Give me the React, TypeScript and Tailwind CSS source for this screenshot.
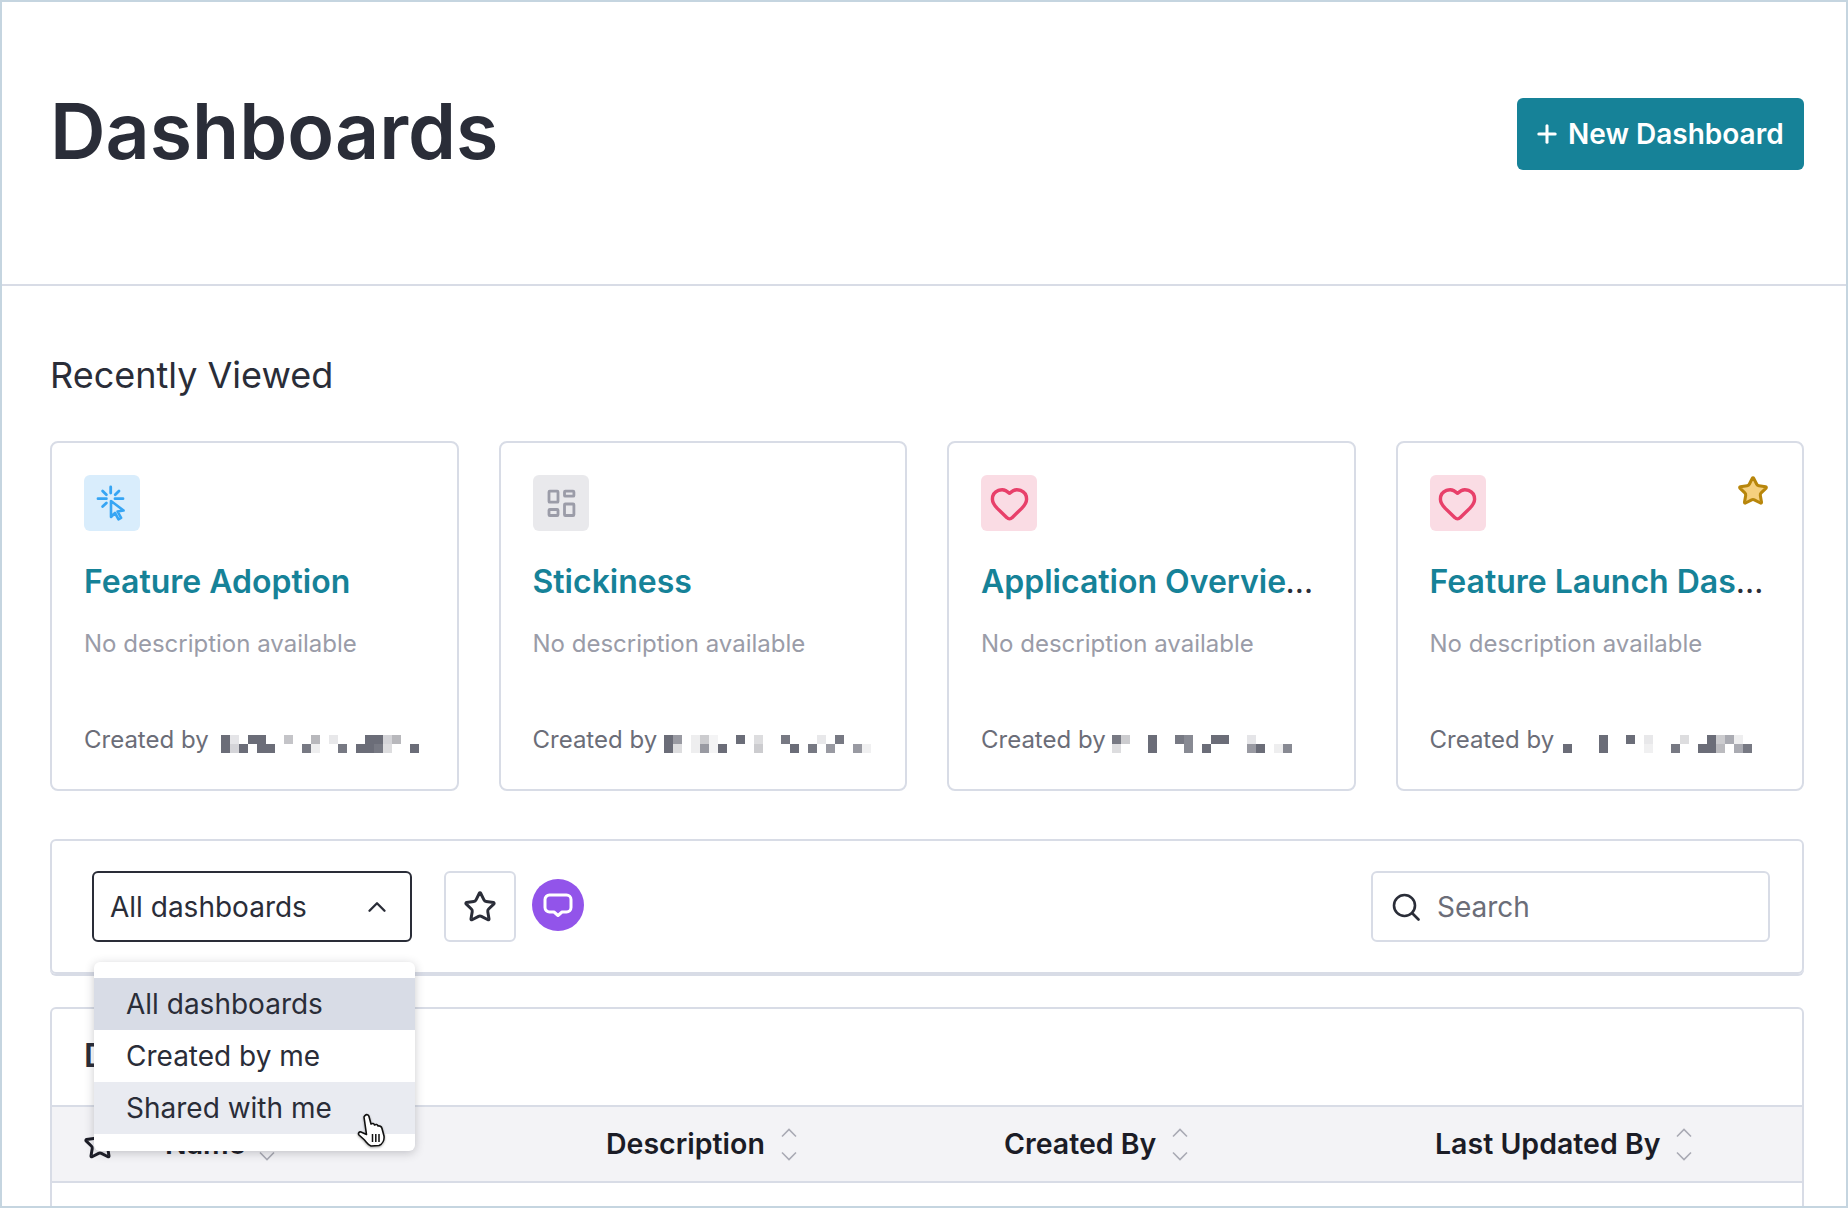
import { ChevronUp, Heart, Plus, Star } from "lucide-react";
import type { ReactNode } from "react";

// column, top cell, bottom cell of the blurred-out author names
type Cell = [number, string | null, string | null];

const D = "#6b6d78";

const namePixels: Cell[][] = [
  [
    [0, D, D], [1, "#e5e5e8", "#d4d4d8"], [2, null, D], [3, D, null], [4, D, D], [5, null, D],
    [7, "#c4c4c8", null], [9, null, "#777983"], [10, "#b8b8bc", "#eeeeef"], [12, "#e8e8ea", null],
    [13, null, "#777983"], [15, null, D], [16, D, D], [17, D, "#777983"], [18, "#d4d4d8", "#dddddf"],
    [19, "#b8b8bc", null], [21, null, D],
  ],
  [
    [0, D, D], [1, "#999aa2", "#dddddf"], [3, "#eeeeef", "#eeeeef"], [4, "#cccccf", "#999aa2"],
    [5, "#f4f4f5", "#f4f4f5"], [6, null, D], [8, D, null], [10, "#dddddf", "#cccccf"],
    [13, "#777983", null], [14, null, D], [16, null, "#777983"], [17, "#e8e8ea", null],
    [18, null, "#999aa2"], [19, "#777983", null], [21, null, "#999aa2"], [22, null, "#f0f0f1"],
  ],
  [
    [0, "#777983", "#dddddf"], [1, "#cccccf", null], [4, D, D], [7, "#777983", null],
    [8, "#888a93", "#888a93"], [10, null, D], [11, D, null], [12, D, null],
    [15, "#e5e5e8", "#999aa2"], [16, null, D], [18, null, "#eeeeef"], [19, null, "#888a93"],
  ],
  [
    [0, null, D], [4, D, D], [7, D, null], [9, "#e8e8ea", "#f0f0f1"], [12, null, "#777983"],
    [13, "#dddddf", null], [15, null, D], [16, D, D], [17, "#cccccf", "#bbbbbf"],
    [18, "#aaabb2", null], [19, "#eeeeef", "#aaabb2"], [20, null, "#777983"],
  ],
];

const Censored = ({ cells }: { cells: Cell[] }) => (
  <svg width={216} height={18} viewBox="0 0 216 18" shapeRendering="crispEdges" className="mt-[11px] shrink-0">
    {cells.map(([col, top, bottom]) => (
      <g key={col}>
        {top && <rect x={col * 9} y={0} width={9} height={9} fill={top} />}
        {bottom && <rect x={col * 9} y={9} width={9} height={9} fill={bottom} />}
      </g>
    ))}
  </svg>
);

const ClickIcon = () => (
  <svg width={56} height={56} viewBox="0 0 56 56" fill="none" stroke="#36a5f4" strokeWidth={2.8} strokeLinecap="round" strokeLinejoin="round">
    <path d="M26.7 12v6M18.6 16l3.8 3.8M35 16l-3.800 3.800M14 23.700h8.400M31 23.700h8M18.600 31.500l3.800-3.600" />
    <path d="M27 26v16l4-4 3.500 6.300 2.600-1.400-3.500-6.400 6-1z" strokeWidth={2.6} />
  </svg>
);

const GridIcon = () => (
  <svg width={56} height={56} viewBox="0 0 56 56" fill="none" stroke="#9b9ca8" strokeWidth={2.8} strokeLinejoin="round">
    <rect x={16} y={16.2} width={9} height={11} rx={0.8} />
    <rect x={31.5} y={16.2} width={9.4} height={5} rx={0.8} />
    <rect x={16} y={34.5} width={9} height={6} rx={0.8} />
    <rect x={31.5} y={29} width={9.4} height={11.5} rx={0.8} />
  </svg>
);

const HeartIcon = () => <Heart size={41} strokeWidth={2} color="#e8406a" />;

const SortIcon = () => (
  <svg width={16} height={33} viewBox="0 0 16 33" fill="none" stroke="#a9aab4" strokeWidth={1.6} className="shrink-0">
    <path d="M1 8.500 8 1.500l7 7M1 24.500l7 7 7-7" />
  </svg>
);

const HandCursor = () => (
  <svg width={30} height={34} viewBox="0 0 30 34" className="drop-shadow-[0_1px_1px_rgba(0,0,0,0.35)]">
    <path
      d="M8 2.500C9.500 1 11.500 1.500 12 3.500L14 11C15.500 10 17 10.500 17.500 12C19 11 20.500 11.500 21 13C22.500 12.500 24.500 13.500 25 15.500L27 23C27.500 27 25.500 31 22 32.500L14 33C11 32 9.500 29 7 26.500L2 22C.8 20.500 2 18.500 4 19L9.500 21.500L7 4Z"
      fill="#fff"
      stroke="#111"
      strokeWidth={1.6}
      strokeLinejoin="round"
    />
    <path d="M15.500 21v8M18.800 21v8M22 21v8" stroke="#111" strokeWidth={1.5} />
  </svg>
);

interface RecentCard {
  title: string;
  icon: ReactNode;
  iconBg: string;
  nameGap: string;
  starred?: boolean;
}

const cards: RecentCard[] = [
  { title: "Feature Adoption", icon: <ClickIcon />, iconBg: "bg-[#d9edfc]", nameGap: "ml-[14px]" },
  { title: "Stickiness", icon: <GridIcon />, iconBg: "bg-[#e9e9ec]", nameGap: "ml-[8px]" },
  { title: "Application Overview Dashboard", icon: <HeartIcon />, iconBg: "bg-[#fadce4]", nameGap: "ml-[8px]" },
  { title: "Feature Launch Dashboard", icon: <HeartIcon />, iconBg: "bg-[#fadce4]", nameGap: "ml-[10px]", starred: true },
];

const columns = ["Description", "Created By", "Last Updated By"];

const App = () => {
  return (
    <div className="w-[1848px] h-[1208px] overflow-hidden border-2 border-[#c5d5e0] bg-white text-[#2a2d38] font-[Inter,sans-serif]">
      {/* Page header */}
      <div className="flex h-[284px] items-start justify-between border-b-2 border-[#d8dce6] pl-12 pr-[42px]">
        <h1 className="mt-[89px] text-[77px] leading-[80px] font-semibold">Dashboards</h1>
        <button className="mt-24 flex h-[72px] w-[287px] items-center gap-[7px] rounded-md bg-[#168298] pl-4 text-[28px] font-semibold text-white">
          <Plus size={28} strokeWidth={2.6} />
          New Dashboard
        </button>
      </div>

      <div className="pl-12 pr-[42px]">
        <h2 className="mt-[67px] text-[36px] leading-[44px]">Recently Viewed</h2>

        {/* Recently viewed cards */}
        <div className="mt-11 grid grid-cols-4 gap-10">
          {cards.map((card, i) => (
            <div key={card.title} className="relative flex h-[350px] flex-col rounded-lg border-2 border-[#d8dce6] px-8 pt-8 pb-[33px]">
              <div className={`flex h-14 w-14 items-center justify-center rounded-md ${card.iconBg}`}>{card.icon}</div>
              {card.starred && (
                <Star size={32} strokeWidth={2.3} color="#b8860b" fill="#f5d07f" className="absolute top-[32px] right-[33px]" />
              )}
              <div className="mt-[31px] truncate text-[32px] leading-10">
                <span className="font-semibold text-[#168298]">{card.title}</span>
              </div>
              <p className="mt-[26px] text-[24px] leading-8 text-[#9a9ca8]">No description available</p>
              <div className="mt-auto flex items-start">
                <span className="w-[123px] shrink-0 text-[24px] leading-8 whitespace-nowrap text-[#6b6d78]">Created by</span>
                <div className={card.nameGap}>
                  <Censored cells={namePixels[i]} />
                </div>
              </div>
            </div>
          ))}
        </div>

        {/* Filter toolbar */}
        <div className="mt-12 flex items-start rounded-md border-2 border-[#d8dce6] pt-[30px] pr-8 pb-[30px] pl-10 shadow-[0_2px_0_#d8dce6]">
          <div className="relative">
            <div className="flex h-[71px] w-[320px] items-center justify-between rounded-md border-2 border-[#2a2d38] pr-[18px] pl-4 text-[28px]">
              All dashboards
              <ChevronUp size={30} strokeWidth={1.9} />
            </div>
            <div className="absolute top-[91px] left-[2px] z-10 h-[189px] w-[321px] rounded-md bg-white py-4 text-[28px] shadow-[0_2px_10px_rgba(42,45,56,0.25)]">
              <div className="flex h-[52px] items-center bg-[#d8dce6] pl-8">All dashboards</div>
              <div className="flex h-[52px] items-center pl-8">Created by me</div>
              <div className="flex h-[52px] items-center bg-[#e9ebf1] pl-8">Shared with me</div>
              <div className="absolute top-[151px] left-[263px]">
                <HandCursor />
              </div>
            </div>
          </div>
          <div className="ml-8 flex h-[71px] w-[72px] items-center justify-center rounded-md border-2 border-[#d8dce6]">
            <Star size={34} strokeWidth={2.1} />
          </div>
          <div className="mt-2 ml-4 flex h-[52px] w-[52px] items-center justify-center rounded-full bg-[#9254ea]">
            <svg width={30} height={25} viewBox="0 0 30 25" fill="none" stroke="#fff" strokeWidth={3} strokeLinejoin="round">
              <path d="M6.500 2h17A4.500 4.500 0 0 1 28 6.500v8a4.500 4.500 0 0 1-4.500 4.500H19l-4 3.500-4-3.500H6.500A4.500 4.500 0 0 1 2 14.500v-8A4.500 4.500 0 0 1 6.500 2Z" />
            </svg>
          </div>
          <div className="ml-auto flex h-[71px] w-[399px] items-center rounded-md border-2 border-[#d8dce6] pl-[19px] text-[28px] text-[#6b6d78]">
            <svg width={28} height={28} viewBox="0 0 28 28" fill="none" stroke="#2a2d38" strokeWidth={2.6} strokeLinecap="round" className="shrink-0">
              <circle cx={12.5} cy={12.5} r={10.5} />
              <path d="m20.500 20.500 6 6" />
            </svg>
            <span className="ml-[17px]">Search</span>
          </div>
        </div>

        {/* Dashboards table, runs off the bottom of the page */}
        <div className="mt-[33px] h-[300px] rounded-t-md border-2 border-[#d8dce6]">
          <div className="flex h-[96px] items-center pb-[3px] pl-8 text-[32px] font-semibold">Dashboards</div>
          <div className="grid h-[78px] grid-cols-[80px_441px_398px_431px_1fr] items-center border-y-2 border-[#d8dce6] bg-[#f3f3f6] pl-[33px] text-[28.5px] font-semibold text-[#1b1c26]">
            <Star size={34} strokeWidth={2.1} className="-ml-[2px]" />
            <div className="flex items-center gap-[13px]">
              Name
              <SortIcon />
            </div>
            {columns.map((col) => (
              <div key={col} className="flex items-center gap-4">
                {col}
                <SortIcon />
              </div>
            ))}
          </div>
        </div>
      </div>
    </div>
  );
};

export default App;
